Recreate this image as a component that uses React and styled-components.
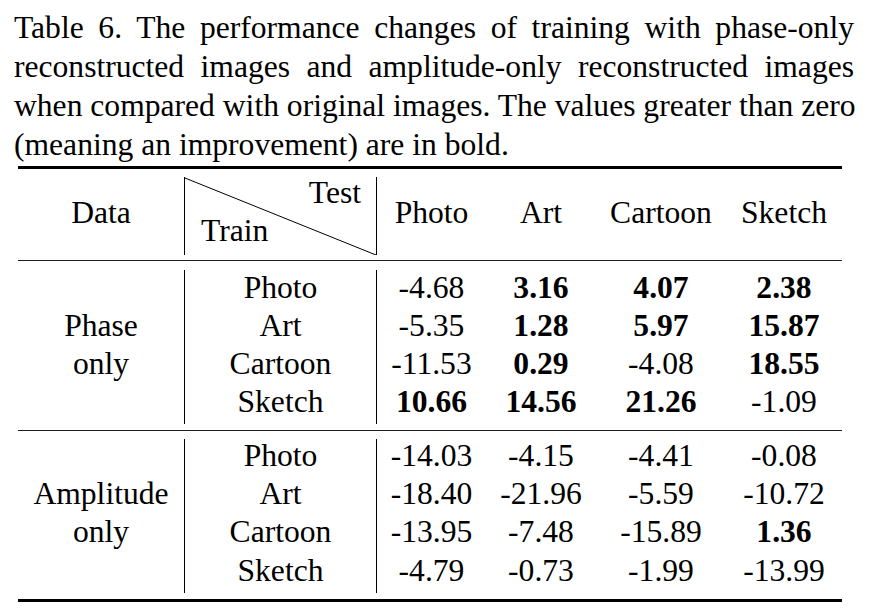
import React from "react";
import styled, { createGlobalStyle } from "styled-components";

const Global = createGlobalStyle`
  html, body { margin: 0; padding: 0; background: #fff; }
  body {
    font-family: "Liberation Serif", "Times New Roman", serif;
    color: #000;
    font-size: 31.6px;
  }
`;

const COLS = "166px 192px 110px 110px 130px 116px";

const Page = styled.div`
  width: 870px;
  display: flex;
  flex-direction: column;
`;

const Caption = styled.div`
  margin: 9.2px 0 0 14px;
  width: 840px;
  display: flex;
  flex-direction: column;
`;

const CaptionLine = styled.div`
  line-height: 38.8px;
  height: 38.8px;
  white-space: nowrap;
  text-align: ${(p) => (p.$last ? "left" : "justify")};
  text-align-last: ${(p) => (p.$last ? "left" : "justify")};
`;

const Table = styled.div`
  margin-left: 18px;
  width: 824px;
  display: flex;
  flex-direction: column;
`;

const Rule = styled.div`
  height: ${(p) => p.$h}px;
  margin-top: ${(p) => p.$mt}px;
  background: ${(p) => (p.$h > 2 ? "#000" : "#1c1c1c")};
`;

const HeaderRow = styled.div`
  margin-top: 8px;
  height: 78px;
  display: grid;
  grid-template-columns: ${COLS};
`;

const HeadCell = styled.div`
  text-align: center;
  line-height: 38px;
  padding-top: 16.6px;
  white-space: nowrap;
  border-left: ${(p) => (p.$line ? "1px solid #000" : "none")};
`;

const DiagCell = styled.div`
  position: relative;
  border-left: 1px solid #000;
  display: flex;
  flex-direction: column;
`;

const Diag = styled.svg`
  position: absolute;
  left: 0;
  top: 0;
  width: 100%;
  height: 100%;
`;

const TestLabel = styled.div`
  line-height: 32px;
  text-align: right;
  padding-right: 15px;
`;

const TrainLabel = styled.div`
  line-height: 32px;
  margin-top: 6px;
  padding-left: 16px;
`;

const Group = styled.div`
  margin-top: ${(p) => p.$mt}px;
  display: grid;
  grid-template-columns: ${COLS};
`;

const Column = styled.div`
  display: flex;
  flex-direction: column;
  padding-bottom: ${(p) => p.$pb}px;
  border-left: ${(p) => (p.$line ? "1px solid #000" : "none")};
`;

const Cell = styled.div`
  height: 38.1px;
  line-height: ${(p) => p.$lh}px;
  text-align: center;
  white-space: nowrap;
  font-weight: ${(p) => (p.$bold ? 700 : 400)};
`;

const domains = ["Photo", "Art", "Cartoon", "Sketch"];

const groups = [
  {
    label: ["Phase", "only"],
    mt: 8.7,
    lh: 35.3,
    pb: 2,
    values: [
      ["-4.68", "3.16", "4.07", "2.38"],
      ["-5.35", "1.28", "5.97", "15.87"],
      ["-11.53", "0.29", "-4.08", "18.55"],
      ["10.66", "14.56", "21.26", "-1.09"],
    ],
  },
  {
    label: ["Amplitude", "only"],
    mt: 8,
    lh: 33.5,
    pb: 1.6,
    values: [
      ["-14.03", "-4.15", "-4.41", "-0.08"],
      ["-18.40", "-21.96", "-5.59", "-10.72"],
      ["-13.95", "-7.48", "-15.89", "1.36"],
      ["-4.79", "-0.73", "-1.99", "-13.99"],
    ],
  },
];

function DataGroup({ g }) {
  return (
    <Group $mt={g.mt}>
      <Column $pb={g.pb}>
        {["", g.label[0], g.label[1], ""].map((t, i) => (
          <Cell key={i} $lh={g.lh}>{t}</Cell>
        ))}
      </Column>
      <Column $pb={g.pb} $line>
        {domains.map((d) => (
          <Cell key={d} $lh={g.lh}>{d}</Cell>
        ))}
      </Column>
      {[0, 1, 2, 3].map((c) => (
        <Column key={c} $pb={g.pb} $line={c === 0}>
          {g.values.map((row, r) => (
            <Cell key={r} $lh={g.lh} $bold={parseFloat(row[c]) > 0}>
              {row[c]}
            </Cell>
          ))}
        </Column>
      ))}
    </Group>
  );
}

export default function App() {
  return (
    <Page>
      <Global />
      <Caption>
        <CaptionLine>Table 6. The performance changes of training with phase-only</CaptionLine>
        <CaptionLine>reconstructed images and amplitude-only reconstructed images</CaptionLine>
        <CaptionLine>when compared with original images. The values greater than zero</CaptionLine>
        <CaptionLine $last>(meaning an improvement) are in bold.</CaptionLine>
      </Caption>
      <Table>
        <Rule $h={3} $mt={1.6} />
        <HeaderRow>
          <HeadCell>Data</HeadCell>
          <DiagCell>
            <Diag viewBox="0 0 192 78" preserveAspectRatio="none">
              <line x1="0" y1="1" x2="192" y2="78" stroke="#000" strokeWidth="1" vectorEffect="non-scaling-stroke" />
            </Diag>
            <TestLabel>Test</TestLabel>
            <TrainLabel>Train</TrainLabel>
          </DiagCell>
          <HeadCell $line>Photo</HeadCell>
          <HeadCell>Art</HeadCell>
          <HeadCell>Cartoon</HeadCell>
          <HeadCell>Sketch</HeadCell>
        </HeaderRow>
        <Rule $h={1.3} $mt={5} />
        <DataGroup g={groups[0]} />
        <Rule $h={1.3} $mt={5.6} />
        <DataGroup g={groups[1]} />
        <Rule $h={3} $mt={6.3} />
      </Table>
    </Page>
  );
}
